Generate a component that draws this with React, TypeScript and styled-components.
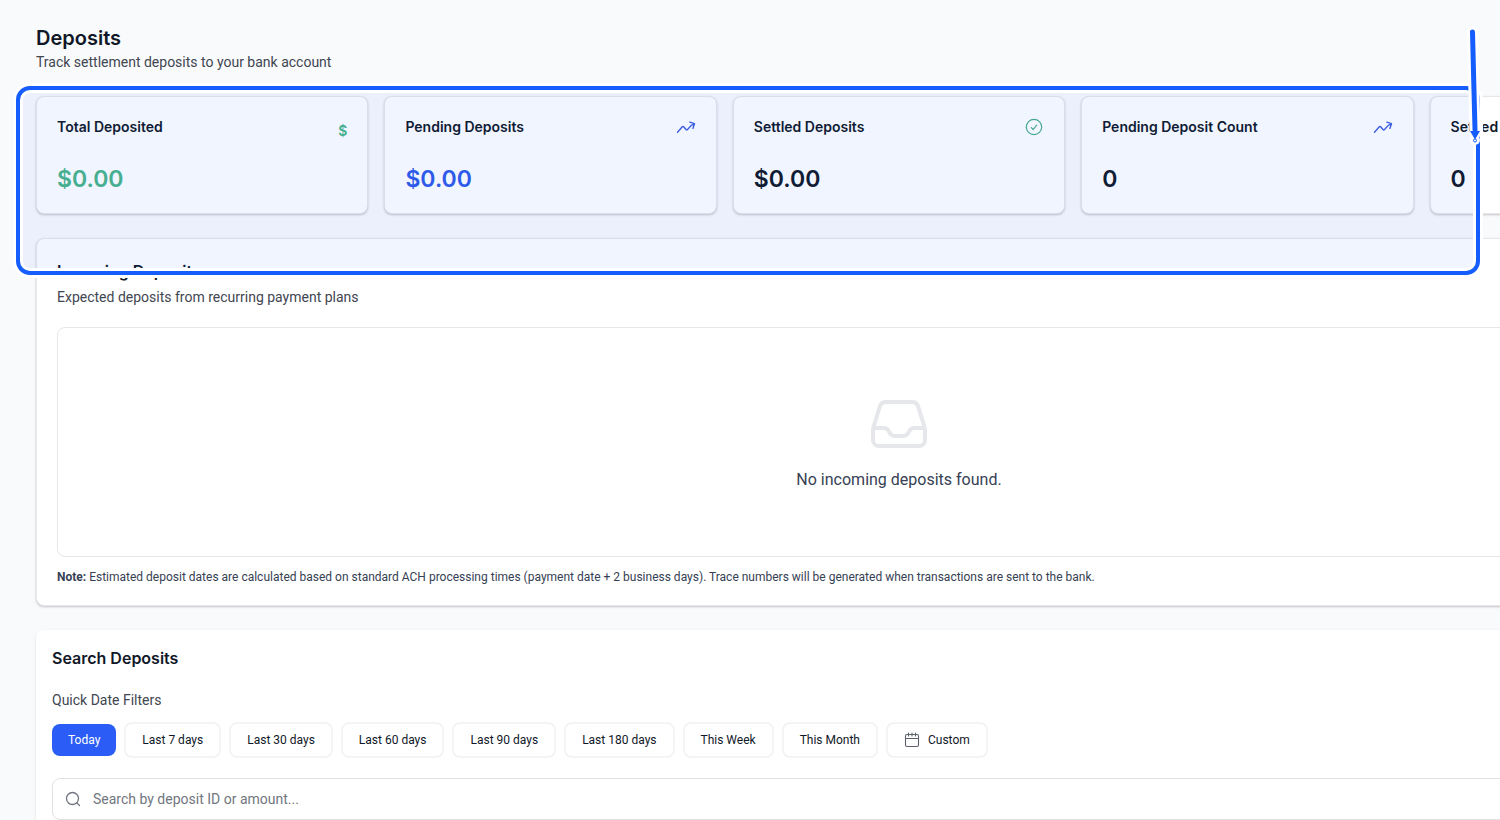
import React from "react";
import styled, { createGlobalStyle } from "styled-components";

const GlobalStyle = createGlobalStyle`
  *, *::before, *::after { box-sizing: border-box; }
  body {
    margin: 0;
    background: #f9fafc;
    color: #101828;
    font-family: Roboto, "Liberation Sans", sans-serif;
    font-size: 14px;
    line-height: 20px;
  }
  h1, h2, h3, p { margin: 0; }
  h1, h2, h3 { font-family: Inter, "Liberation Sans", sans-serif; font-weight: 600; }
  button, input { font: inherit; }
`;

const Viewport = styled.div`
  position: relative;
  height: 100vh;
  overflow: hidden;
`;

const Page = styled.main`
  width: 120vw;
  padding: 24px 38px 24px 36px;
  display: flex;
  flex-direction: column;
  gap: 24px;
`;

const PageHeader = styled.header``;

const PageTitle = styled.h1`
  font-size: 20px;
  line-height: 28px;
`;

const Muted = styled.p`
  color: #414651;
  font-size: 14px;
  line-height: 20px;
`;

const Stats = styled.section`
  display: grid;
  grid-template-columns: repeat(5, minmax(0, 1fr));
  gap: 16px;
`;

const Panel = styled.section`
  background: #fff;
  border: 1px solid #e5e7eb;
  border-radius: 8px;
  box-shadow: 0 1px 3px rgba(0, 0, 0, 0.1), 0 1px 2px rgba(0, 0, 0, 0.12);
`;

const StatCard = styled(Panel).attrs({ as: "article" })`
  height: 118px;
  padding: 20px;
  display: flex;
  flex-direction: column;
  justify-content: space-between;
`;

const StatHead = styled.div`
  display: flex;
  justify-content: space-between;
  align-items: center;
  height: 20px;
`;

const StatLabel = styled.h3`
  font-size: 14px;
  line-height: 20px;
`;

const StatValue = styled.p<{ $color: string }>`
  color: ${(p) => p.$color};
  font-family: Inter, "Liberation Sans", sans-serif;
  font-size: 23px;
  line-height: 28px;
  font-weight: 600;
`;

const Dollar = styled.span`
  color: #4bb58a;
  font-family: Inter, "Liberation Sans", sans-serif;
  font-weight: 600;
  padding-top: 8px;
`;

const IncomingPanel = styled(Panel)`
  padding: 20px;
`;

const SectionTitle = styled.h2`
  font-size: 16px;
  line-height: 24px;
`;

const IncomingHeader = styled.header`
  display: flex;
  flex-direction: column;
  gap: 4px;
`;

const EmptyState = styled.div`
  margin: 20px 0 12px;
  height: 230px;
  border: 1px solid #e5e7eb;
  border-radius: 8px;
  display: flex;
  flex-direction: column;
  align-items: center;
  justify-content: center;
  gap: 12px;
  color: #364153;
  font-size: 16px;
  line-height: 24px;
`;

const Note = styled.p`
  color: #364153;
  font-size: 12px;
  line-height: 16px;
`;

const SearchPanel = styled(Panel)`
  padding: 16px;
  min-height: 280px;
  border: 0;
  box-shadow: 0 1px 3px rgba(0, 0, 0, 0.1);
`;

const FilterGroup = styled.div`
  margin: 20px 0;
  display: flex;
  flex-direction: column;
  gap: 12px;
`;

const Filters = styled.div`
  display: flex;
  align-items: center;
  gap: 8px;
`;

const FilterButton = styled.button<{ $active?: boolean }>`
  display: flex;
  align-items: center;
  gap: 8px;
  height: ${(p) => (p.$active ? "32px" : "36px")};
  padding: 0 16px;
  border: ${(p) => (p.$active ? "0" : "2px solid #f3f4f6")};
  border-radius: 8px;
  background: ${(p) => (p.$active ? "#2b5cf5" : "#fff")};
  color: ${(p) => (p.$active ? "#fff" : "#101828")};
  font-size: 12px;
  line-height: 16px;
  white-space: nowrap;
`;

const SearchField = styled.label`
  display: flex;
  align-items: center;
  gap: 12px;
  height: 42px;
  padding: 0 12px;
  border: 1px solid #e0e2e6;
  border-radius: 8px;
`;

const SearchInput = styled.input`
  flex: 1;
  min-width: 0;
  border: 0;
  outline: 0;
  padding: 0;
  background: transparent;
  &::placeholder { color: #717680; opacity: 1; }
`;

const Highlight = styled.div`
  position: absolute;
  left: 16px;
  right: 20px;
  top: 86px;
  height: 189px;
  border: 4px solid #155dfc;
  border-radius: 14px;
  background: rgba(21, 93, 252, 0.06);
  box-shadow: 0 0 0 3px #fff, inset 0 0 0 3px #fff;
  pointer-events: none;
`;

const Arrow = styled.svg`
  position: absolute;
  top: 24px;
  right: 15px;
  pointer-events: none;
`;

const TrendIcon = () => (
  <svg width="20" height="20" viewBox="0 0 20 20" fill="none" stroke="#3f5fe0" strokeWidth="1.4" strokeLinecap="round" strokeLinejoin="round" aria-hidden="true">
    <path d="M1.5 15.200 6.300 9.800c.4-.4.9-.4 1.300 0l2.600 2.900c.4.4.8.400 1.200-.1C13 10 15.500 7.800 18.500 6.700M13.800 5.200l4.700 1.500-1.600 4.700" />
  </svg>
);

const CheckIcon = () => (
  <svg width="20" height="20" viewBox="0 0 20 20" fill="none" stroke="#4bae8a" strokeWidth="1.2" strokeLinecap="round" strokeLinejoin="round" aria-hidden="true">
    <circle cx="10" cy="10" r="7.700" />
    <path d="m7.300 10.600 1.900 1.900 3.500-4.400" />
  </svg>
);

const InboxIcon = () => (
  <svg width="64" height="64" viewBox="0 0 64 64" fill="none" stroke="#e5e7eb" strokeWidth="4" strokeLinejoin="round" aria-hidden="true">
    <path d="M6 38V48a6 6 0 0 0 6 6H52a6 6 0 0 0 6-6V38c0-1-.2-2-.5-3L51 14a6 6 0 0 0-5.700-4H18.700A6 6 0 0 0 13 14L6.500 35c-.3 1-.5 2-.5 3Z" />
    <path d="M6 36H16.500a6 6 0 0 1 5.400 3.300l.7 1.400A6 6 0 0 0 28 44H36a6 6 0 0 0 5.400-3.300l.7-1.400A6 6 0 0 1 47.500 36H58" />
  </svg>
);

const CalendarIcon = () => (
  <svg width="16" height="16" viewBox="0 0 16 16" fill="none" stroke="#5d626c" strokeWidth="1.1" strokeLinecap="round" aria-hidden="true">
    <rect x="1.500" y="2.500" width="13" height="12" rx="1.500" />
    <path d="M1.500 6.500h13M4.500 1v3M8 1v3M11.500 1v3" />
  </svg>
);

const SearchIcon = () => (
  <svg width="16" height="16" viewBox="0 0 16 16" fill="none" stroke="#717680" strokeWidth="1.3" strokeLinecap="round" aria-hidden="true">
    <circle cx="7.500" cy="7.500" r="6" />
    <path d="m12 12 2.500 2.500" />
  </svg>
);

const stats = [
  { label: "Total Deposited", value: "$0.00", color: "#4bb58a", icon: <Dollar>$</Dollar> },
  { label: "Pending Deposits", value: "$0.00", color: "#2f5be7", icon: <TrendIcon /> },
  { label: "Settled Deposits", value: "$0.00", color: "#101828", icon: <CheckIcon /> },
  { label: "Pending Deposit Count", value: "0", color: "#101828", icon: <TrendIcon /> },
  { label: "Settled Deposit Count", value: "0", color: "#101828", icon: <CheckIcon /> },
];

const filters = ["Today", "Last 7 days", "Last 30 days", "Last 60 days", "Last 90 days", "Last 180 days", "This Week", "This Month"];

export default function App() {
  return (
    <Viewport>
      <GlobalStyle />
      <Page>
        <PageHeader>
          <PageTitle>Deposits</PageTitle>
          <Muted>Track settlement deposits to your bank account</Muted>
        </PageHeader>
        <Stats>
          {stats.map((s) => (
            <StatCard key={s.label}>
              <StatHead>
                <StatLabel>{s.label}</StatLabel>
                {s.icon}
              </StatHead>
              <StatValue $color={s.color}>{s.value}</StatValue>
            </StatCard>
          ))}
        </Stats>
        <IncomingPanel>
          <IncomingHeader>
            <SectionTitle>Incoming Deposits</SectionTitle>
            <Muted>Expected deposits from recurring payment plans</Muted>
          </IncomingHeader>
          <EmptyState>
            <InboxIcon />
            <p>No incoming deposits found.</p>
          </EmptyState>
          <Note>
            <strong>Note:</strong> Estimated deposit dates are calculated based on standard ACH processing times (payment date + 2 business days). Trace numbers will be generated when transactions are sent to the bank.
          </Note>
        </IncomingPanel>
        <SearchPanel>
          <SectionTitle>Search Deposits</SectionTitle>
          <FilterGroup>
            <Muted>Quick Date Filters</Muted>
            <Filters>
              {filters.map((f, i) => (
                <FilterButton key={f} type="button" $active={i === 0}>{f}</FilterButton>
              ))}
              <FilterButton type="button"><CalendarIcon />Custom</FilterButton>
            </Filters>
          </FilterGroup>
          <SearchField>
            <SearchIcon />
            <SearchInput type="text" aria-label="Search deposits" placeholder="Search by deposit ID or amount..." />
          </SearchField>
        </SearchPanel>
      </Page>
      <Highlight />
      <Arrow width="20" height="124" viewBox="0 0 20 124" fill="none" aria-hidden="true">
        <path d="M7.500 8 10 110" stroke="#fff" strokeWidth="11" strokeLinecap="round" />
        <circle cx="10" cy="116" r="5" fill="#fff" />
        <path d="M7.500 8 10 106" stroke="#155dfc" strokeWidth="5" strokeLinecap="round" />
        <path d="M5 107h10L10 115.500Z" fill="#155dfc" />
        <circle cx="10" cy="116.500" r="1.500" fill="#fff" stroke="#155dfc" />
      </Arrow>
    </Viewport>
  );
}
